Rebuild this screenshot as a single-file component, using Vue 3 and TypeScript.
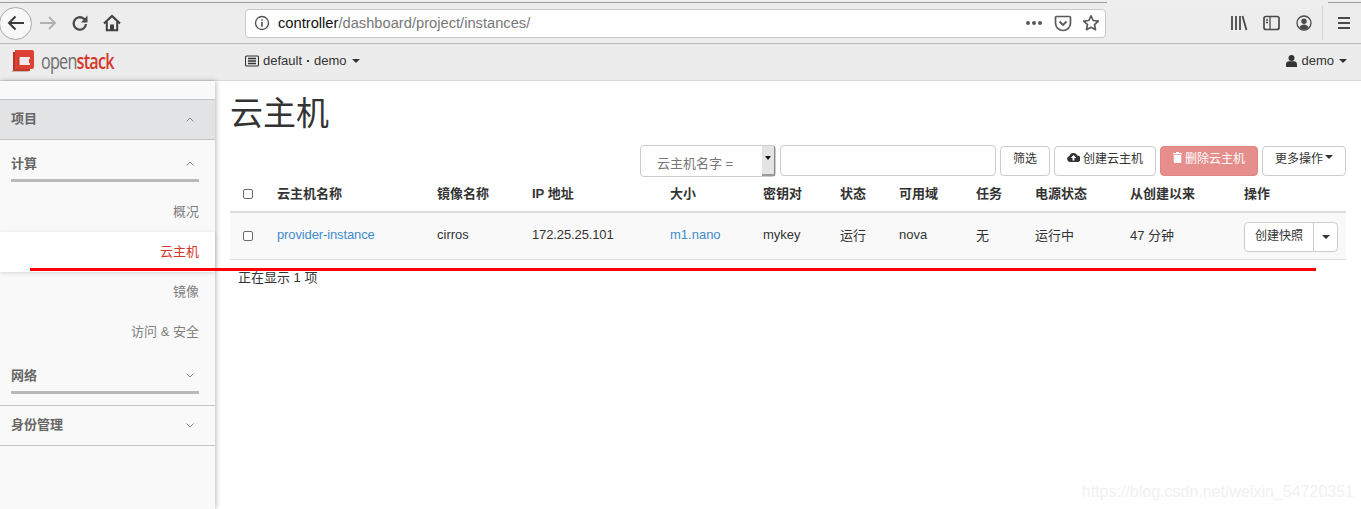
<script setup lang="ts">
interface Column {
  label: string;
  width: number;
}

const columns: Column[] = [
  { label: '云主机名称', width: 160 },
  { label: '镜像名称', width: 95 },
  { label: 'IP 地址', width: 138 },
  { label: '大小', width: 93 },
  { label: '密钥对', width: 77 },
  { label: '状态', width: 59 },
  { label: '可用域', width: 77 },
  { label: '任务', width: 59 },
  { label: '电源状态', width: 95 },
  { label: '从创建以来', width: 114 },
  { label: '操作', width: 110 }
];

const plainCells = ['运行', 'nova', '无', '运行中', '47 分钟'];
const computeLinks = ['概况', '云主机', '镜像', '访问 & 安全'];
</script>

<template>
  <div class="page">
    <div class="tab-strip">
      <span class="tab-line left"></span>
      <span class="tab-line right"></span>
    </div>
    <header class="browser-bar">
      <button class="back-btn" aria-label="back">
        <svg width="20" height="20" viewBox="0 0 20 20"><path d="M18 10H3M9.500 3.500 3 10l6.500 6.500" fill="none" stroke="#3c3c3e" stroke-width="2"/></svg>
      </button>
      <svg class="tool fwd" width="18" height="18" viewBox="0 0 18 18"><path d="M1 9h15M10 3l6 6-6 6" fill="none" stroke="#b0b0b0" stroke-width="1.800"/></svg>
      <svg class="tool reload" width="18" height="18" viewBox="0 0 18 18"><path d="M15 10A6.200 6.200 0 1 1 12.800 4.700L15.500 7" fill="none" stroke="#4a4a4c" stroke-width="2.300"/><path d="M16.500 1.500v7H10z" fill="#4a4a4c"/></svg>
      <svg class="tool home" width="18" height="18" viewBox="0 0 18 18"><path d="M1 9.500 9 2l8 7.500" fill="none" stroke="#3f3f41" stroke-width="2.200"/><path d="M3.800 8v8.200h10.400V8" fill="none" stroke="#3f3f41" stroke-width="2"/><path d="M7 10.500h4V17H7z" fill="#3f3f41"/></svg>
      <div class="url-box">
        <svg class="info" width="16" height="16" viewBox="0 0 16 16"><circle cx="8" cy="8" r="6.500" fill="none" stroke="#4f4f51" stroke-width="1.300"/><path d="M7.200 7h1.600v4.800H7.200zM7.200 4.200h1.600v1.600H7.200z" fill="#4f4f51"/></svg>
        <span class="url"><b>controller</b>/dashboard/project/instances/</span>
        <span class="url-dots">
          <i></i><i></i><i></i>
        </span>
        <svg class="pocket" width="18" height="18" viewBox="0 0 18 18"><path d="M2.500 2.500h13a1 1 0 0 1 1 1V9a7.500 7.500 0 0 1-15 0V3.500a1 1 0 0 1 1-1z" fill="none" stroke="#59595b" stroke-width="1.700"/><path d="m5.500 7.500 3.500 3.500 3.500-3.500" fill="none" stroke="#59595b" stroke-width="1.800"/></svg>
        <svg class="star" width="18" height="18" viewBox="0 0 18 18"><path d="m9 1.800 2.200 4.700 5.100.6-3.800 3.500 1 5.100L9 13.200l-4.500 2.500 1-5.100-3.800-3.500 5.100-.6z" fill="none" stroke="#59595b" stroke-width="1.700" stroke-linejoin="round"/></svg>
      </div>
      <svg class="tool library" width="18" height="16" viewBox="0 0 18 16"><path d="M2 1v14M6 1v14M10 1v14M12.500 1l4 14" fill="none" stroke="#4a4a4c" stroke-width="1.800"/></svg>
      <svg class="tool sidebar-icon" width="18" height="16" viewBox="0 0 18 16"><rect x="1" y="1.500" width="15" height="13" rx="2" fill="none" stroke="#4a4a4c" stroke-width="1.700"/><path d="M7 1.500v13M3 5h2M3 7.500h2" fill="none" stroke="#4a4a4c" stroke-width="1.300"/></svg>
      <svg class="tool account" width="16" height="16" viewBox="0 0 16 16"><circle cx="8" cy="8" r="7" fill="none" stroke="#4a4a4c" stroke-width="1.300"/><circle cx="8" cy="6.200" r="2.700" fill="#4a4a4c"/><path d="M3.500 12.500c1-2.200 2.700-3 4.500-3s3.500.8 4.500 3A6 6 0 0 1 3.500 12.500z" fill="#4a4a4c"/></svg>
      <span class="tool-sep"></span>
      <svg class="tool burger" width="14" height="14" viewBox="0 0 14 14"><path d="M1 2h12M1 7h12M1 12h12" stroke="#4a4a4c" stroke-width="1.800"/></svg>
    </header>

    <nav class="navbar">
      <svg class="logo-mark" width="24" height="24" viewBox="0 0 24 24">
        <path d="M4 1h17a2 2 0 0 1 2 2v15a2 2 0 0 1-2 2H4z" fill="#dc4133"/>
        <path d="M2 3h2v18H2z" fill="#b5352a"/>
        <path d="M0 23l2-2h17l-2 2z" fill="#c9b7b3"/>
        <path d="M2 20h17v2H2z" fill="#c23a2e"/>
        <path d="M7 8h12v8H7z" fill="#f1eaea"/>
        <path d="M7 8h1.500v8H7z" fill="#b9332a"/>
        <path d="M18 10h2v4h-2z" fill="#dc4133"/>
      </svg>
      <span class="logo-text">open<em>stack</em></span>
      <span class="project-picker">
        <svg width="14" height="12" viewBox="0 0 14 12"><rect x=".5" y="1" width="13" height="10" rx="1" fill="none" stroke="#333" stroke-width="1.100"/><path d="M3 3.500h8M3 6h8M3 8.500h8" stroke="#333" stroke-width="1.300"/></svg>
        <span>default<i class="dot"></i>demo</span>
        <i class="caret"></i>
      </span>
      <span class="user-menu">
        <svg width="11" height="12" viewBox="0 0 11 12"><circle cx="5.500" cy="3" r="3" fill="#333"/><path d="M0 12V9.200C0 7.400 1.500 6.200 3 6.200h5c1.500 0 3 1.200 3 3V12z" fill="#333"/></svg>
        demo
        <i class="caret"></i>
      </span>
    </nav>

    <div class="layout">
      <aside class="sidebar">
        <div class="panel-head current">
          <span>项目</span>
          <svg width="8" height="5" viewBox="0 0 8 5"><path d="m.5 4.500 3.500-3.500 3.500 3.500" fill="none" stroke="#888" stroke-width="1"/></svg>
        </div>
        <div class="group-head">
          <span>计算</span>
          <svg width="8" height="5" viewBox="0 0 8 5"><path d="m.5 4.500 3.500-3.500 3.500 3.500" fill="none" stroke="#888" stroke-width="1"/></svg>
        </div>
        <ul class="links">
          <li v-for="link in computeLinks" :key="link" :class="{ active: link === '云主机' }">{{ link }}</li>
        </ul>
        <div class="group-head">
          <span>网络</span>
          <svg width="8" height="5" viewBox="0 0 8 5"><path d="m.5.500 3.500 3.500 3.500-3.500" fill="none" stroke="#888" stroke-width="1"/></svg>
        </div>
        <div class="panel-head identity">
          <span>身份管理</span>
          <svg width="8" height="5" viewBox="0 0 8 5"><path d="m.5.500 3.500 3.500 3.500-3.500" fill="none" stroke="#888" stroke-width="1"/></svg>
        </div>
      </aside>

      <main class="content">
        <h1>云主机</h1>
        <div class="actions">
          <div class="filter-select">
            <span>云主机名字 =</span>
            <span class="select-arrow"></span>
          </div>
          <input class="filter-input" type="text" />
          <button class="btn">筛选</button>
          <button class="btn">
            <svg width="13" height="10" viewBox="0 0 13 10"><path d="M3 10a3 3 0 0 1-.6-5.900A4.200 4.200 0 0 1 10.300 3.400 3.300 3.300 0 0 1 10 10zM6.500 3 3.800 6h1.700v2.500h2V6h1.700z" fill="#333" fill-rule="evenodd"/></svg>
            创建云主机
          </button>
          <button class="btn danger">
            <svg width="9" height="11" viewBox="0 0 9 11"><path d="M3 1V0h3v1h3v1.200H0V1zM.7 3h7.600v7a1 1 0 0 1-1 1H1.700a1 1 0 0 1-1-1z" fill="#fff"/></svg>
            删除云主机
          </button>
          <button class="btn more">更多操作<i class="caret"></i></button>
        </div>

        <table class="instances">
          <colgroup>
            <col style="width: 39px" />
            <col v-for="col in columns" :key="col.label" :style="{ width: col.width + 'px' }" />
          </colgroup>
          <thead>
            <tr>
              <th class="check"><span class="box"></span></th>
              <th v-for="col in columns" :key="col.label">{{ col.label }}</th>
            </tr>
          </thead>
          <tbody>
            <tr>
              <td class="check"><span class="box"></span></td>
              <td class="latin"><a>provider-instance</a></td>
              <td>cirros</td>
              <td class="latin">172.25.25.101</td>
              <td><a>m1.nano</a></td>
              <td>mykey</td>
              <td v-for="cell in plainCells" :key="cell">{{ cell }}</td>
              <td class="op">
                <div class="split">
                  <button class="split-main">创建快照</button>
                  <button class="split-caret"><i class="caret dark"></i></button>
                </div>
              </td>
            </tr>
          </tbody>
          <tfoot>
            <tr>
              <td colspan="12">正在显示 1 项</td>
            </tr>
          </tfoot>
        </table>
      </main>
    </div>

    <!-- hand drawn annotation and image watermark sit on top of the page -->
    <div class="red-mark"></div>
    <div class="watermark">https://blog.csdn.net/weixin_54720351</div>
  </div>
</template>

<style>
html, body {
  margin: 0;
  background: #fff;
}
</style>

<style scoped>
.page {
  position: relative;
  width: 1361px;
  height: 509px;
  overflow: hidden;
  display: flex;
  flex-direction: column;
  font-family: "Liberation Sans", "Noto Sans CJK SC", sans-serif;
  font-size: 13px;
  color: #333;
  background: #fff;
}

.tab-strip {
  position: relative;
  height: 3px;
  background: #eee;
  flex-shrink: 0;
}
.tab-line {
  position: absolute;
  top: 2px;
  height: 1px;
  background: #9b9b9b;
}
.tab-line.left { left: 0; width: 1107px; }
.tab-line.right { left: 1328px; right: 0; }

.browser-bar {
  height: 40px;
  flex-shrink: 0;
  display: flex;
  align-items: center;
  background: #ededed;
  border-bottom: 1px solid #b9b9b9;
}
.back-btn {
  width: 33px;
  height: 33px;
  margin-left: -1px;
  padding: 0;
  border: 1px solid #a9a9a9;
  border-radius: 50%;
  background: #f8f8f8;
  display: flex;
  align-items: center;
  justify-content: center;
  flex-shrink: 0;
}
.tool { flex-shrink: 0; }
.fwd { margin-left: 7px; }
.reload { margin-left: 14px; }
.home { margin-left: 14px; }
.url-box {
  width: 861px;
  height: 29px;
  margin-left: 124px;
  box-sizing: border-box;
  display: flex;
  align-items: center;
  background: #fff;
  border: 1px solid #c8c8c8;
  border-radius: 4px;
  flex-shrink: 0;
  color: #777;
  font-size: 14.700px;
}
.info { margin-left: 8px; }
.url { margin-left: 8px; flex: 1; }
.url b { font-weight: 400; color: #111; }
.url-dots { display: flex; gap: 2px; margin-right: 12px; }
.url-dots i {
  width: 4px;
  height: 4px;
  border-radius: 50%;
  background: #59595b;
}
.pocket { margin-right: 10px; }
.star { margin-right: 5px; }
.library { margin-left: 124px; }
.sidebar-icon { margin-left: 15px; }
.account { margin-left: 15px; }
.tool-sep {
  width: 1px;
  height: 34px;
  margin-left: 10px;
  background: #d4d4d4;
}
.burger { margin-left: 14px; }

.navbar {
  height: 37px;
  box-sizing: border-box;
  padding-bottom: 3px;
  flex-shrink: 0;
  display: flex;
  align-items: center;
  background: #ececec;
  border-bottom: 1px solid #d9d9d9;
}
.logo-mark { margin-left: 11px; flex-shrink: 0; }
.logo-text {
  margin-left: 6px;
  width: 73px;
  font-family: "Open Sans", sans-serif;
  font-size: 21px;
  letter-spacing: -1px;
  color: #6c6c6c;
  transform: scaleX(0.77);
  transform-origin: left center;
}
.logo-text em {
  font-style: normal;
  font-weight: 600;
  color: #d6372c;
}
.project-picker {
  margin-left: 131px;
  display: flex;
  align-items: center;
  gap: 4px;
  color: #333;
}
.dot {
  display: inline-block;
  width: 2px;
  height: 2px;
  margin: 0 5px 2px;
  background: #333;
  vertical-align: middle;
}
.user-menu {
  margin-left: auto;
  margin-right: 14px;
  display: flex;
  align-items: center;
  gap: 4px;
}
.caret {
  display: inline-block;
  width: 0;
  height: 0;
  margin-left: 1px;
  border-top: 4px solid #333;
  border-left: 4px solid transparent;
  border-right: 4px solid transparent;
}

.layout {
  flex: 1;
  display: flex;
  min-height: 0;
}
.sidebar {
  position: relative;
  width: 215px;
  flex-shrink: 0;
  box-sizing: border-box;
  padding-top: 18px;
  background: #f9f9f9;
  box-shadow: 1px 0 5px rgba(0, 0, 0, 0.28);
  font-size: 13px;
}
.panel-head {
  height: 41px;
  box-sizing: border-box;
  display: flex;
  align-items: center;
  justify-content: space-between;
  padding: 0 21px 5px 11px;
  border-top: 1px solid #c4c4c4;
  border-bottom: 1px solid #c4c4c4;
  font-weight: 700;
  color: #666;
}
.panel-head svg { margin-top: 4px; }
.panel-head.current { background: #e2e3e5; }
.panel-head.identity { margin-top: 11px; }
.group-head {
  height: 42px;
  box-sizing: border-box;
  margin: 0 16px 0 11px;
  padding: 12px 5px 7px 0;
  display: flex;
  align-items: center;
  justify-content: space-between;
  border-bottom: 3px solid #b9b9b9;
  font-weight: 700;
  color: #666;
}
.group-head svg { margin-top: 2px; }
.links {
  list-style: none;
  margin: 0;
  padding: 10px 0 0;
}
.links li {
  height: 40px;
  line-height: 39px;
  padding-right: 16px;
  text-align: right;
  color: #808080;
}
.links li.active {
  position: relative;
  line-height: 40px;
  background: #fff;
  color: #d6372c;
  box-shadow: 0 1px 4px rgba(0, 0, 0, 0.14);
}

.content {
  flex: 1;
  min-width: 0;
  padding: 0 15px;
}
h1 {
  margin: 0;
  height: 64px;
  font-size: 33px;
  font-weight: 400;
  line-height: 66px;
  color: #333;
}
.actions {
  height: 31px;
  display: flex;
  justify-content: flex-end;
  gap: 4px;
}
.filter-select {
  position: relative;
  width: 136px;
  height: 32px;
  box-sizing: border-box;
  padding: 9px 0 0 16px;
  border: 1px solid #ccc;
  border-radius: 4px;
  color: #777;
  line-height: 18px;
  background: #fff;
}
.select-arrow {
  position: absolute;
  top: 0;
  right: 0;
  bottom: 0;
  width: 12px;
  background: #e4e4e4;
  border-right: 1px solid #888;
  border-bottom: 2px solid #999;
}
.select-arrow::after {
  content: "";
  position: absolute;
  top: 10px;
  left: 3px;
  border-top: 4px solid #111;
  border-left: 3px solid transparent;
  border-right: 3px solid transparent;
}
.filter-input {
  width: 216px;
  height: 31px;
  box-sizing: border-box;
  border: 1px solid #ccc;
  border-radius: 4px;
  margin: 0;
  padding: 0;
  background: #fff;
}
.btn {
  height: 30px;
  margin-top: 1px;
  padding: 0 12px 8px;
  display: flex;
  align-items: center;
  gap: 3px;
  box-sizing: border-box;
  border: 1px solid #ccc;
  border-radius: 4px;
  background: #fff;
  color: #333;
  font: inherit;
  font-size: 12px;
  white-space: nowrap;
}
.btn.more {
  gap: 0;
  padding-right: 12px;
}
.btn.more .caret { margin-left: 2px; }
.btn.danger {
  background: #e58e8c;
  border-color: #e08583;
  color: #fff;
}

.instances {
  width: 1116px;
  table-layout: fixed;
  border-collapse: separate;
  border-spacing: 0;
}
.instances th {
  height: 37px;
  padding: 0 8px 2px;
  box-sizing: border-box;
  border-bottom: 2px solid #ddd;
  text-align: left;
  font-weight: 700;
  white-space: nowrap;
}
.instances th.check { padding-bottom: 0; }
.instances tbody td {
  height: 47px;
  padding: 0 8px 4px;
  box-sizing: border-box;
  background: #f9f9f9;
  border-bottom: 1px solid #ddd;
  white-space: nowrap;
}
.instances tbody td.check { padding-bottom: 0; }
.instances tbody td.op { padding: 1px 8px 0; }
.instances tfoot td {
  height: 36px;
  padding: 0 8px 4px;
  box-sizing: border-box;
}
.instances .check { padding-left: 13px; }
.instances a { color: #428bca; }
.instances .latin { letter-spacing: -0.120px; }
.box {
  display: block;
  width: 10px;
  height: 10px;
  border: 1px solid #6b6b6b;
  border-radius: 2px;
  background: #fff;
  box-sizing: border-box;
}
.split {
  display: flex;
  height: 30px;
}
.split button {
  box-sizing: border-box;
  background: #fff;
  border: 1px solid #ccc;
  color: #333;
  font: inherit;
  font-size: 12px;
  padding: 0;
}
.split .split-main {
  width: 70px;
  padding-bottom: 4px;
  border-radius: 4px 0 0 4px;
}
.split-caret {
  width: 25px;
  margin-left: -1px;
  border-radius: 0 4px 4px 0;
}
.caret.dark { margin-left: 0; vertical-align: middle; }

.red-mark {
  position: absolute;
  left: 30px;
  top: 268px;
  width: 1286px;
  height: 3px;
  background: #f00;
}
.watermark {
  position: absolute;
  right: 7px;
  top: 483px;
  font-size: 16px;
  color: #f1f1f1;
}
</style>
